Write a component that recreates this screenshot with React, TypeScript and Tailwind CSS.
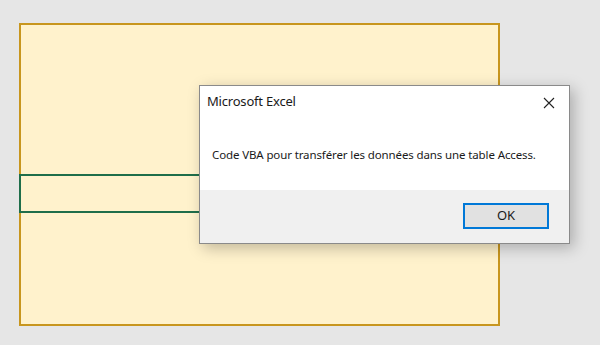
import React from "react";

export default function App() {
	return (
		<div className="relative w-[600px] h-[345px] bg-[#e6e6e6] overflow-hidden" style={{ fontFamily: '"Noto Sans", "Open Sans", sans-serif' }}>
			{/* Sheet area */}
			<div className="absolute left-[19px] top-[23px] w-[481px] h-[303px] border-2 border-[#c8961e] bg-[#fff2cc]">
				<div className="-ml-[2px] mt-[149px] w-[480px] h-[39px] border-2 border-[#1f6e4a]" />
			</div>

			{/* Message box */}
			<div className="absolute left-[199px] top-[85px] w-[371px] h-[159px] border border-[#8a8a8a] bg-white shadow-[4px_4px_14px_rgba(0,0,0,0.25)] flex flex-col">
				<div className="flex items-center justify-between h-[32px] pl-[7px] pr-[14px]">
					<span className="text-[13px] text-[#1a1a1a] tracking-[-0.2px]">Microsoft Excel</span>
					<svg width="12" height="12" viewBox="0 0 12 12" className="mt-[2px]">
						<path d="M1 1 L11 11 M11 1 L1 11" stroke="#222" strokeWidth="1.1" />
					</svg>
				</div>
				<div className="flex-1 flex items-center pl-[12px] pt-[2px]">
					<span className="text-[11.5px] text-[#1a1a1a] whitespace-nowrap tracking-[-0.12px]">Code VBA pour transférer les données dans une table Access.</span>
				</div>
				<div className="h-[53px] bg-[#f0f0f0] flex items-start justify-end pt-[13px] pr-[20px]">
					<div className="w-[86px] h-[26px] border-2 border-[#0078d7] bg-[#e1e1e1] flex items-center justify-center text-[13px] text-[#1a1a1a]">
						OK
					</div>
				</div>
			</div>
		</div>
	);
}
